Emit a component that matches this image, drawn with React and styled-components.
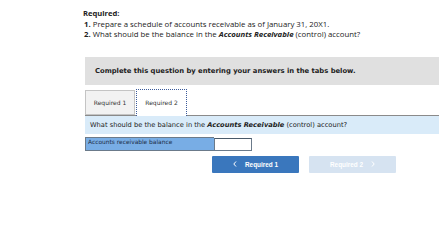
import React from 'react'
import styled, { createGlobalStyle } from 'styled-components'

const Global = createGlobalStyle`
  html, body {
    margin: 0;
    padding: 0;
    background: #fff;
    overflow: hidden;
  }
`

const Page = styled.div`
  width: 439px;
  height: 246px;
  padding-top: 8px;
  box-sizing: border-box;
`

const Intro = styled.div`
  margin-left: 83px;
  font-family: 'Open Sans', 'Noto Sans', sans-serif;
  font-size: 7.8px;
  color: #222;
  line-height: 10.5px;

  h4 {
    margin: 0;
    font-size: 7.6px;
    font-weight: 700;
  }

  p {
    margin: 0 0 0 1px;
  }

  b {
    font-weight: 700;
  }
`

const Panel = styled.div`
  margin-left: 85px;
  margin-top: 17px;
  width: 360px;
  font-family: 'DejaVu Sans', Verdana, sans-serif;
`

const Instruction = styled.div`
  background: #e0e0e0;
  height: 28px;
  padding: 0 10px;
  display: flex;
  align-items: center;
  font-size: 6.8px;
  font-weight: 700;
  color: #222;
`

const Tabs = styled.div`
  display: flex;
  align-items: flex-end;
  margin-top: 4px;
  height: 26px;
  border-bottom: 1px solid #8a8a8a;
`

const Tab = styled.div`
  box-sizing: border-box;
  width: ${p => (p.$active ? 51 : 50)}px;
  height: ${p => (p.$active ? 27 : 25)}px;
  margin-bottom: ${p => (p.$active ? -1 : 0)}px;
  margin-left: ${p => (p.$active ? 1 : 0)}px;
  display: flex;
  align-items: center;
  justify-content: center;
  font-size: 6px;
  color: #333;
  background: ${p => (p.$active ? '#fff' : '#f2f2f2')};
  border: ${p => (p.$active ? '1px dotted #3a5a9a' : '1px solid #c4c4c4')};
  border-bottom: ${p => (p.$active ? 'none' : '1px solid #c4c4c4')};
`

const Question = styled.div`
  background: #d9ebf9;
  height: 18px;
  padding: 0 5px;
  display: flex;
  align-items: center;
  font-size: 6.7px;
  color: #222;

  b {
    font-style: italic;
    margin: 0 2px;
  }
`

const AnswerRow = styled.div`
  display: flex;
  margin-top: 3px;
  height: 14px;
`

const Label = styled.div`
  box-sizing: border-box;
  width: 129px;
  background: #78ade5;
  border: 1px solid #6b7a8a;
  border-right: none;
  padding: 0 2px;
  font-size: 5.9px;
  line-height: 9px;
  color: #1c2c44;
`

const Input = styled.input`
  box-sizing: border-box;
  width: 38px;
  height: 13px;
  margin-top: 1px;
  border: 1px solid #6b7a8a;
  border-top-color: #4a5a6a;
  background: #fff;
  padding: 0;
  outline: none;
`

const Nav = styled.div`
  display: flex;
  gap: 10px;
  margin-top: 5px;
  margin-left: 127px;
`

const NavButton = styled.div`
  width: 87px;
  height: 17px;
  display: flex;
  align-items: center;
  justify-content: center;
  gap: 8px;
  font-family: 'Liberation Sans', Arial, sans-serif;
  font-size: 6.4px;
  font-weight: 700;
  color: #fff;
  background: ${p => (p.$disabled ? '#d6e3f1' : '#3a77bd')};
  border-radius: 1px;
`

const Chevron = ({ dir }) => (
  <svg width="4" height="6" viewBox="0 0 4 6">
    <path
      d={dir === 'left' ? 'M3 0.5 L0.8 3 L3 5.5' : 'M1 0.5 L3.2 3 L1 5.5'}
      fill="none"
      stroke="#fff"
      strokeWidth="1"
    />
  </svg>
)

export default function App() {
  return (
    <Page>
      <Global />
      <Intro>
        <h4>Required:</h4>
        <p><b>1.</b> Prepare a schedule of accounts receivable as of January 31, 20X1.</p>
        <p><b>2.</b> What should be the balance in the <b><i>Accounts Receivable</i></b> (control) account?</p>
      </Intro>
      <Panel>
        <Instruction>Complete this question by entering your answers in the tabs below.</Instruction>
        <Tabs>
          <Tab>Required 1</Tab>
          <Tab $active>Required 2</Tab>
        </Tabs>
        <Question>
          What should be the balance in the <b>Accounts Receivable</b> (control) account?
        </Question>
        <AnswerRow>
          <Label>Accounts receivable balance</Label>
          <Input type="text" />
        </AnswerRow>
        <Nav>
          <NavButton>
            <Chevron dir="left" />
            Required 1
          </NavButton>
          <NavButton $disabled>
            Required 2
            <Chevron dir="right" />
          </NavButton>
        </Nav>
      </Panel>
    </Page>
  )
}
